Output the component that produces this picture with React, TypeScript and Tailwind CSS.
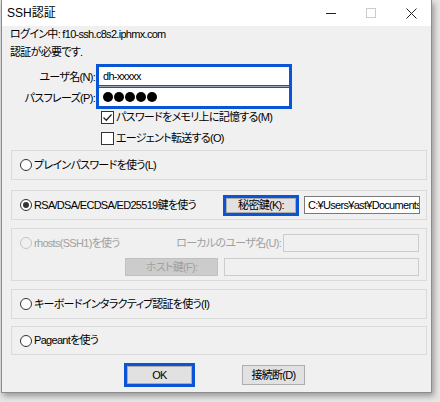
import React from 'react';

const Radio: React.FC<{ checked?: boolean; disabled?: boolean }> = ({ checked, disabled }) => (
  <span
    className={
      disabled
        ? 'w-[12px] h-[12px] shrink-0 rounded-full border border-[#c4c4c4] bg-[#f0f0f0] flex items-center justify-center'
        : 'w-[12px] h-[12px] shrink-0 rounded-full border border-[#333333] bg-white flex items-center justify-center'
    }
  >
    {checked && <span className="w-[6px] h-[6px] rounded-full bg-[#333333]" />}
  </span>
);

const Checkbox: React.FC<{ checked?: boolean; label: string }> = ({ checked, label }) => (
  <div className="h-[13px] flex items-center gap-[2px] pl-[99px]">
    <span className="w-[13px] h-[13px] shrink-0 border border-[#333333] bg-white flex items-center justify-center">
      {checked && (
        <svg width="11" height="11" viewBox="0 0 11 11">
          <path d="M1.5 5.5 L4.3 8.3 L9.5 2.5" fill="none" stroke="#222" strokeWidth="1.3" />
        </svg>
      )}
    </span>
    <span className="leading-none">{label}</span>
  </div>
);

export default function App() {
  return (
    <div className="w-[440px] h-[402px] bg-[#e6e6e6] overflow-hidden font-['Liberation_Sans','Noto_Sans_CJK_JP',sans-serif] text-[11px] text-black tracking-[-0.7px] [font-feature-settings:'palt']">
      <div className="ml-[1px] w-[431px] border-x border-b border-[#8c8c8c] bg-[#f0f0f0] shadow-[2px_3px_6px_rgba(0,0,0,0.35)]">
        {/* title bar */}
        <div className="h-[26px] bg-white flex items-center">
          <span className="pl-[5px] text-[12px] tracking-normal">SSH認証</span>
          <div className="ml-auto flex h-full">
            <div className="w-[40px] h-full flex items-center justify-center">
              <span className="w-[10px] h-[1px] bg-[#222]" />
            </div>
            <div className="w-[40px] h-full flex items-center justify-center">
              <span className="w-[10px] h-[10px] border border-[#cccccc]" />
            </div>
            <div className="w-[40px] h-full flex items-center justify-center">
              <svg width="11" height="11" viewBox="0 0 11 11">
                <path d="M0.5 0.5 L10.5 10.5 M10.5 0.5 L0.5 10.5" stroke="#222" strokeWidth="1" />
              </svg>
            </div>
          </div>
        </div>

        <div className="flex flex-col pb-[5px]">
          <div className="h-[17px] flex items-center pl-[8px]">ログイン中: f10-ssh.c8s2.iphmx.com</div>
          <div className="h-[18px] flex items-center pl-[8px]">認証が必要です.</div>

          {/* user / passphrase */}
          <div className="mt-[3px] flex">
            <div className="w-[94px] flex flex-col items-end pt-[3px]">
              <div className="h-[20px] flex items-center pr-[1px]">ユーザ名(N):</div>
              <div className="h-[22px] flex items-center pr-[1px]">パスフレーズ(P):</div>
            </div>
            <div className="w-[196px] border-[3px] border-[#0a55d6] flex flex-col">
              <div className="h-[18px] bg-white flex items-center pl-[4px]">dh-xxxxx</div>
              <div className="h-[3px] bg-[#0a55d6] flex flex-col justify-center">
                <span className="h-[1px] bg-[#9aa6bb]" />
              </div>
              <div className="h-[18px] bg-white flex items-center pl-[4px] gap-[1px]">
                <span className="w-[10px] h-[10px] rounded-full bg-black" />
                <span className="w-[10px] h-[10px] rounded-full bg-black" />
                <span className="w-[10px] h-[10px] rounded-full bg-black" />
                <span className="w-[10px] h-[10px] rounded-full bg-black" />
                <span className="w-[10px] h-[10px] rounded-full bg-black" />
              </div>
            </div>
          </div>

          <div className="mt-[2px] flex flex-col gap-[8px]">
            <Checkbox checked label="パスワードをメモリ上に記憶する(M)" />
            <Checkbox label="エージェント転送する(O)" />
          </div>

          {/* auth methods */}
          <div className="pl-[9px] flex flex-col">
            <div className="mt-[5px] w-[416px] h-[30px] border border-[#dadada] flex items-center gap-[2px] pl-[8px]">
              <Radio />
              <span>プレインパスワードを使う(L)</span>
            </div>

            <div className="mt-[10px] w-[416px] h-[30px] border border-[#dadada] flex items-center pl-[8px] pr-[6px]">
              <Radio checked />
              <span className="ml-[2px]">RSA/DSA/ECDSA/ED25519鍵を使う</span>
              <div className="ml-auto w-[76px] h-[21px] border-[3px] border-[#0a55d6]">
                <div className="h-full bg-[#e1e1e1] border border-[#adadad] flex items-center justify-center">
                  秘密鍵(K):
                </div>
              </div>
              <div className="ml-[5px] w-[116px] h-[18px] bg-white border border-[#7a7a7a] flex items-center pl-[3px] overflow-hidden whitespace-nowrap">
                C:¥Users¥ast¥Documents
              </div>
            </div>

            <div className="mt-[8px] w-[416px] h-[53px] border border-[#dadada] flex flex-col pr-[7px]">
              <div className="mt-[5px] h-[18px] flex items-center pl-[8px] text-[#a0a0a0]">
                <Radio disabled />
                <span className="ml-[2px]">rhosts(SSH1)を使う</span>
                <span className="ml-auto mr-[2px]">ローカルのユーザ名(U):</span>
                <div className="w-[136px] h-[18px] border border-[#cccccc] bg-[#f0f0f0]" />
              </div>
              <div className="mt-[6px] h-[18px] flex items-center justify-end gap-[6px]">
                <div className="w-[93px] h-[18px] bg-[#cccccc] border border-[#c0c0c0] flex items-center justify-center text-[#a0a0a0]">
                  ホスト鍵(F):
                </div>
                <div className="w-[195px] h-[18px] border border-[#cccccc] bg-[#f0f0f0]" />
              </div>
            </div>

            <div className="mt-[8px] w-[416px] h-[30px] border border-[#dadada] flex items-center gap-[2px] pl-[8px]">
              <Radio />
              <span>キーボードインタラクティブ認証を使う(I)</span>
            </div>

            <div className="mt-[7px] w-[416px] h-[29px] border border-[#dadada] flex items-center gap-[2px] pl-[8px]">
              <Radio />
              <span>Pageantを使う</span>
            </div>
          </div>

          {/* buttons */}
          <div className="mt-[8px] flex items-center pl-[122px]">
            <div className="w-[71px] h-[24px] border-[3px] border-[#0a55d6]">
              <div className="h-full bg-[#e1e1e1] border border-[#adadad] flex items-center justify-center">OK</div>
            </div>
            <div className="ml-[47px] w-[63px] h-[20px] bg-[#e1e1e1] border border-[#adadad] flex items-center justify-center">
              接続断(D)
            </div>
          </div>
        </div>
      </div>
    </div>
  );
}
